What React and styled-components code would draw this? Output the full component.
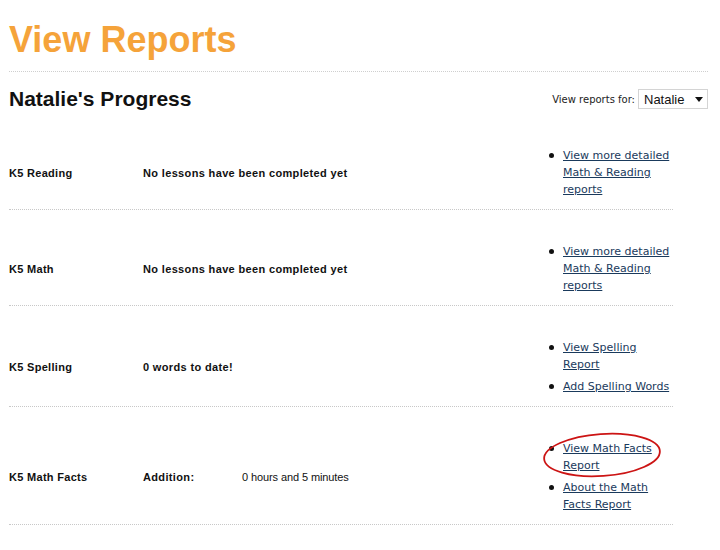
import React from "react";
import styled, { createGlobalStyle } from "styled-components";

const GlobalStyle = createGlobalStyle`
  body {
    margin: 0;
    background: #ffffff;
    font-family: "Liberation Sans", Arial, sans-serif;
    color: #111;
  }
`;

const Page = styled.div`
  width: 699px;
  padding: 19px 0 0 9px;
`;

const Title = styled.h1`
  margin: 0;
  font-family: "Liberation Sans", Arial, sans-serif;
  font-size: 36px;
  line-height: 41px;
  font-weight: 700;
  color: #f5a33a;
  padding-bottom: 11px;
  border-bottom: 1px dotted #cfcfcf;
`;

const Header = styled.div`
  display: flex;
  justify-content: space-between;
  align-items: center;
  margin: 15px 0 3px;
`;

const Heading = styled.h2`
  margin: 0;
  font-size: 21px;
  line-height: 24px;
  font-weight: 700;
  color: #111;
`;

const Picker = styled.label`
  display: flex;
  align-items: center;
  gap: 3px;
  font-family: "DejaVu Sans", Verdana, sans-serif;
  font-size: 10px;
  color: #222;
`;

const SelectWrap = styled.div`
  position: relative;
  width: 70px;
  height: 20px;
`;

const Select = styled.select`
  appearance: none;
  width: 100%;
  height: 100%;
  box-sizing: border-box;
  border: 1px solid #d4d4d4;
  background: #fff;
  padding: 0 0 0 5px;
  font-family: "Liberation Sans", Arial, sans-serif;
  font-size: 13px;
  color: #111;
  border-radius: 0;
  outline: none;
`;

const Caret = styled.svg`
  position: absolute;
  right: 5px;
  top: 8px;
  pointer-events: none;
`;

const Table = styled.div`
  width: 664px;
`;

const Row = styled.div`
  display: grid;
  grid-template-columns: 134px 99px 1fr 128px;
  align-items: center;
  padding: 33px 0 11px;
  border-bottom: 1px dotted #c8c8c8;
  font-size: 11px;
`;

const Label = styled.div`
  font-weight: 700;
  letter-spacing: 0.3px;
  color: #111;
`;

const Value = styled.div`
  font-weight: ${(p) => (p.bold ? 700 : 400)};
  letter-spacing: ${(p) => (p.bold ? "0.35px" : "-0.1px")};
  grid-column: ${(p) => (p.span ? "span 2" : "auto")};
  color: #111;
  white-space: nowrap;
`;

const Links = styled.ul`
  grid-column: 4;
  margin: 0;
  padding: 0;
  list-style: none;
  display: flex;
  flex-direction: column;
  gap: 5px;
`;

const Item = styled.li`
  position: relative;
  display: flex;
  align-items: flex-start;
  font-family: "DejaVu Sans", Verdana, sans-serif;
  font-size: 11px;
  line-height: 17px;
`;

const Bullet = styled.span`
  flex-shrink: 0;
  width: 5px;
  height: 5px;
  border-radius: 50%;
  background: #111;
  margin: 6px 9px 0 4px;
`;

const Link = styled.a`
  color: #1a3a5c;
  text-decoration: underline;
  width: 110px;
`;

const Circle = styled.svg`
  position: absolute;
  left: -4px;
  top: -10px;
  pointer-events: none;
`;

const rows = [
  {
    label: "K5 Reading",
    value: "No lessons have been completed yet",
    links: ["View more detailed Math & Reading reports"],
  },
  {
    label: "K5 Math",
    value: "No lessons have been completed yet",
    links: ["View more detailed Math & Reading reports"],
  },
  {
    label: "K5 Spelling",
    value: "0 words to date!",
    links: ["View Spelling Report", "Add Spelling Words"],
  },
  {
    label: "K5 Math Facts",
    value: "Addition:",
    extra: "0 hours and 5 minutes",
    links: ["View Math Facts Report", "About the Math Facts Report"],
    circled: 0,
  },
];

export default function App() {
  return (
    <Page>
      <GlobalStyle />
      <Title>View Reports</Title>
      <Header>
        <Heading>Natalie's Progress</Heading>
        <Picker>
          View reports for:
          <SelectWrap>
            <Select defaultValue="Natalie">
              <option>Natalie</option>
            </Select>
            <Caret width="8" height="5" viewBox="0 0 8 5">
              <path d="M0 0h8L4 5z" fill="#111" />
            </Caret>
          </SelectWrap>
        </Picker>
      </Header>
      <Table>
        {rows.map((r) => (
          <Row key={r.label}>
            <Label>{r.label}</Label>
            {r.extra ? (
              <>
                <Value bold>{r.value}</Value>
                <Value>{r.extra}</Value>
              </>
            ) : (
              <Value bold span>
                {r.value}
              </Value>
            )}
            <Links>
              {r.links.map((l, i) => (
                <Item key={l}>
                  <Bullet />
                  <Link href="#">{l}</Link>
                  {r.circled === i && (
                    <Circle width="122" height="50" viewBox="0 0 122 50">
                      <ellipse
                        cx="61"
                        cy="25"
                        rx="58"
                        ry="21"
                        fill="none"
                        stroke="#cc1414"
                        strokeWidth="1.8"
                        transform="rotate(-4 61 25)"
                      />
                    </Circle>
                  )}
                </Item>
              ))}
            </Links>
          </Row>
        ))}
      </Table>
    </Page>
  );
}
